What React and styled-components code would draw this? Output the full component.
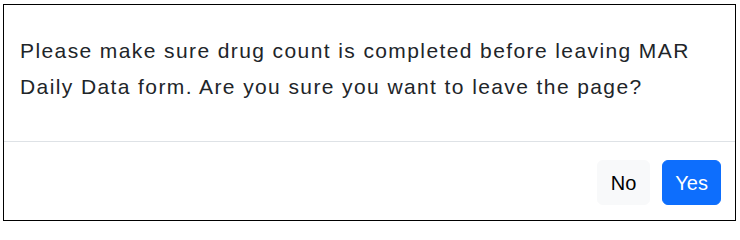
import React from 'react'
import styled, { createGlobalStyle } from 'styled-components'

const GlobalStyle = createGlobalStyle`
  html, body {
    margin: 0;
    padding: 0;
    background: #ffffff;
  }
  body {
    font-family: "Liberation Sans", Arial, sans-serif;
  }
`

const Dialog = styled.div`
  box-sizing: border-box;
  display: flex;
  flex-direction: column;
  width: 733px;
  height: 217px;
  margin: 4px 0 0 3px;
  border: 1px solid #000000;
  background: #ffffff;
`

const Body = styled.div`
  padding: 28px 16px 36px 16px;
  border-bottom: 1px solid #dee2e6;
`

const Message = styled.p`
  margin: 0;
  font-size: 21px;
  line-height: 36px;
  letter-spacing: 1.4px;
  color: #212529;
`

const Footer = styled.div`
  display: flex;
  justify-content: flex-end;
  align-items: flex-start;
  gap: 12px;
  padding: 18px 14px 0 0;
`

const Button = styled.button`
  box-sizing: border-box;
  height: 45px;
  padding: 0 ${(p) => (p.$primary ? '12px' : '13px')};
  border: 1px solid ${(p) => (p.$primary ? '#0d6efd' : '#f8f9fa')};
  border-radius: 6px;
  background: ${(p) => (p.$primary ? '#0d6efd' : '#f8f9fa')};
  color: ${(p) => (p.$primary ? '#ffffff' : '#000000')};
  font-family: "Liberation Sans", Arial, sans-serif;
  font-size: 20px;
  line-height: 1;
  cursor: pointer;
`

export default function App() {
  return (
    <>
      <GlobalStyle />
      <Dialog>
        <Body>
          <Message>
            Please make sure drug count is completed before leaving MAR Daily
            Data form. Are you sure you want to leave the page?
          </Message>
        </Body>
        <Footer>
          <Button>No</Button>
          <Button $primary>Yes</Button>
        </Footer>
      </Dialog>
    </>
  )
}
